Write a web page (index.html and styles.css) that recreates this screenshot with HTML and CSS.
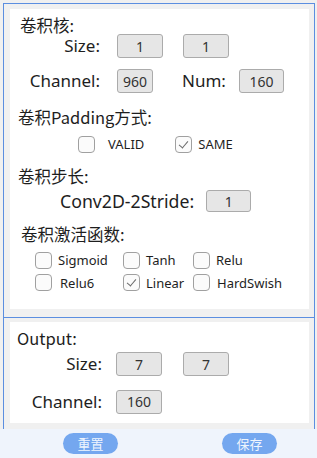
FILE: index.html
```html
<!DOCTYPE html>
<html>
<head>
<meta charset="utf-8">
<link rel="stylesheet" href="styles.css">
</head>
<body>
<div class="app">
  <div class="scroll">
    <div class="frame frame-top">
      <div class="panel panel-1">
        <div class="title t1">卷积核:</div>
        <div class="row r-size">
          <span class="lbl lbl-main">Size:</span>
          <span class="box w46">1</span>
          <span class="box w46 second">1</span>
        </div>
        <div class="row r-chan">
          <span class="lbl lbl-main">Channel:</span>
          <span class="box w36">960</span>
          <span class="lbl lbl-num">Num:</span>
          <span class="box w45">160</span>
        </div>
        <div class="title t2">卷积Padding方式:</div>
        <div class="row r-pad">
          <span class="cb cb-valid"></span><span class="opt opt-valid">VALID</span>
          <span class="cb cb-same checked"></span><span class="opt opt-same">SAME</span>
        </div>
        <div class="title t3">卷积步长:</div>
        <div class="row r-stride">
          <span class="lbl lbl-stride">Conv2D-2Stride:</span>
          <span class="box w45 h22">1</span>
        </div>
        <div class="title t4">卷积激活函数:</div>
        <div class="act act-1">
          <div class="item c1"><span class="cb"></span><span class="opt">Sigmoid</span></div>
          <div class="item c2"><span class="cb"></span><span class="opt">Tanh</span></div>
          <div class="item c3"><span class="cb"></span><span class="opt">Relu</span></div>
        </div>
        <div class="act act-2">
          <div class="item c1"><span class="cb"></span><span class="opt relu6">Relu6</span></div>
          <div class="item c2"><span class="cb checked"></span><span class="opt">Linear</span></div>
          <div class="item c3"><span class="cb"></span><span class="opt hs">HardSwish</span></div>
        </div>
      </div>
    </div>
    <div class="frame frame-bottom">
      <div class="panel panel-2">
        <div class="title t5">Output:</div>
        <div class="row r-osize">
          <span class="lbl lbl-out">Size:</span>
          <span class="box w46">7</span>
          <span class="box w46 second2">7</span>
        </div>
        <div class="row r-ochan">
          <span class="lbl lbl-out">Channel:</span>
          <span class="box w46">160</span>
        </div>
      </div>
    </div>
  </div>
  <div class="footer">
    <button class="btn btn-reset">重置</button>
    <button class="btn btn-save">保存</button>
  </div>
</div>
</body>
</html>
```

FILE: styles.css
```css
* { box-sizing: border-box; }
html, body { margin: 0; padding: 0; }
body {
  background: #f0f0f0;
  font-family: "Noto Sans", "Noto Sans CJK SC", sans-serif;
  color: #1e1e1e;
  width: 317px;
  height: 458px;
  overflow: hidden;
}
.app { width: 317px; height: 458px; display: flex; flex-direction: column; }
.scroll {
  height: 429px;
  overflow: hidden;
  padding: 3px 2px 0 3px;
  flex: none;
}
.frame {
  border-left: 1px solid #5b8ee0;
  border-right: 1px solid #5b8ee0;
}
.frame-top {
  border-top: 1px solid #5b8ee0;
  border-bottom: 1px solid #5b8ee0;
  padding: 5px 5px 8px 6px;
}
.frame-bottom {
  padding: 4px 5px 40px 6px;
}
.panel { background: #fff; }
.panel-1 { height: 300px; padding-top: 7px; }
.panel-2 { height: 101px; padding-top: 7px; }

.title {
  font-family: "Noto Sans CJK SC", "Noto Sans", sans-serif;
  font-size: 16.5px;
  line-height: 19px;
  height: 19px;
  white-space: nowrap;
}
.t1 { padding-left: 10px; }
.t2 { padding-left: 8px; margin-top: 15px; }
.t3 { padding-left: 8px; margin-top: 14px; }
.t4 { padding-left: 11px; margin-top: 13px; }
.t5 { padding-left: 7px; }

.row { display: flex; align-items: center; height: 24px; }
.r-size { margin-top: -1px; }
.r-chan { margin-top: 11px; }
.r-pad { margin-top: 8px; height: 18px; }
.r-stride { margin-top: 4px; height: 22px; }
.r-osize { margin-top: 4px; }
.r-ochan { margin-top: 14px; height: 23px; }

.lbl { font-size: 17px; white-space: nowrap; text-align: right; line-height: 20px; }
.lbl-main { width: 90px; margin-right: 17px; }
.lbl-num { margin-left: 29px; margin-right: 13px; }
.lbl-stride { margin-left: 50px; margin-right: 12px; font-size: 17.7px; }
.lbl-out { width: 92px; margin-right: 14px; }

.box {
  display: inline-flex;
  align-items: center;
  justify-content: center;
  height: 24px;
  background: #e6e6e6;
  border: 1px solid #ababab;
  border-radius: 3px;
  font-size: 14px;
  color: #333;
}
.w46 { width: 46px; }
.w45 { width: 45px; }
.w36 { width: 36px; }
.h22 { height: 22px; }
.second { margin-left: 20px; }
.second2 { margin-left: 21px; }

.cb {
  display: inline-block;
  position: relative;
  width: 17px;
  height: 17px;
  border: 1px solid #a0a0a0;
  border-radius: 4px;
  background: #fbfbfb;
  flex: none;
}
.cb.checked::after {
  content: "";
  position: absolute;
  left: 5px;
  top: 2px;
  width: 4px;
  height: 8px;
  border-right: 1px solid #6a6a6a;
  border-bottom: 1px solid #6a6a6a;
  transform: rotate(40deg);
}
.opt { font-size: 13px; white-space: nowrap; line-height: 18px; }
.cb-valid { margin-left: 68px; }
.opt-valid { margin-left: 13px; }
.cb-same { margin-left: 31px; }
.opt-same { margin-left: 6px; }

.act { display: flex; align-items: center; height: 20px; padding-left: 25px; }
.act-1 { margin-top: 6px; }
.act-2 { margin-top: 2px; height: 21px; }
.item { display: flex; align-items: center; }
.item .opt { margin-left: 6px; }
.c1 { width: 88px; }
.c2 { width: 70px; }
.relu6 { margin-left: 8px !important; }
.hs { margin-left: 7px !important; }

.footer {
  height: 29px;
  background: #eff4fc;
  display: flex;
  align-items: flex-start;
  padding-top: 4px;
}
.btn {
  width: 55px;
  height: 21px;
  border: none;
  border-radius: 11px;
  background: #74a7ef;
  color: rgba(255,255,255,0.9);
  font-family: "Noto Sans CJK SC", sans-serif;
  font-size: 13px;
  line-height: 21px;
  padding: 0;
}
.btn-reset { margin-left: 63px; }
.btn-save { margin-left: 104px; }
```
